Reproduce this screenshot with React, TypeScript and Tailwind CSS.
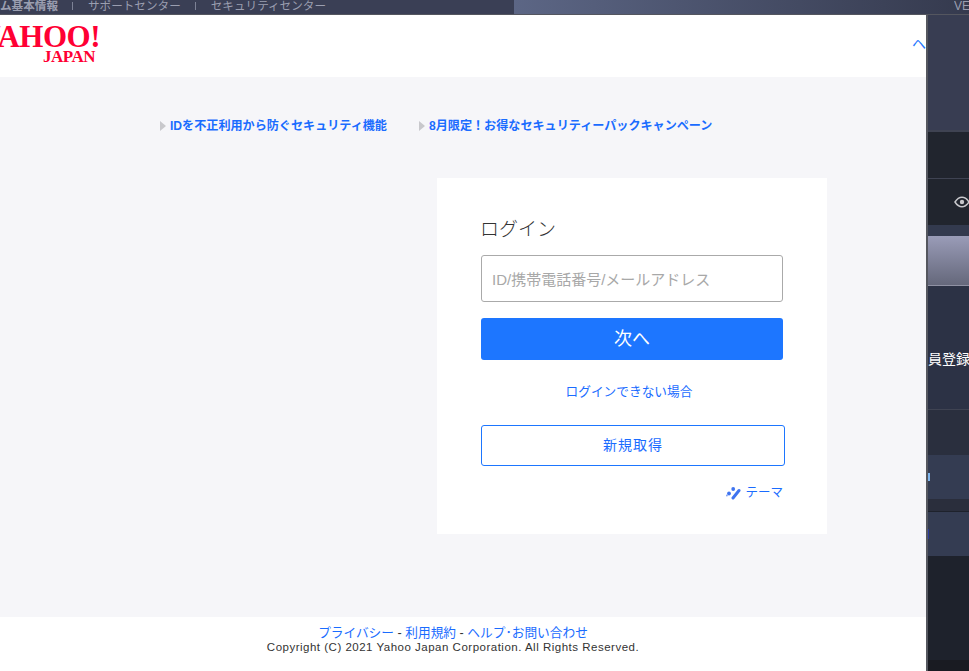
import { Fragment } from 'react'

const TOP_LINKS = ['ム基本情報', 'サポートセンター', 'セキュリティセンター']

const NOTICES = [
  { label: 'IDを不正利用から防ぐセキュリティ機能', className: 'w-[259px]' },
  { label: '8月限定！お得なセキュリティーパックキャンペーン', className: '' },
]

export default function App() {
  return (
    <div className="flex flex-col w-[969px] h-[671px] overflow-hidden bg-[#2c3245] font-['Liberation_Sans','Noto_Sans_CJK_JP',sans-serif]">
      <TopStrip />
      <div className="flex flex-1 min-h-0">
        <main className="flex flex-col w-[926px] shrink-0 bg-white">
          {/* Header */}
          <header className="flex items-center h-[62px] shrink-0 overflow-hidden">
            <YahooLogo />
            <a className="ml-[812px] mb-[4px] shrink-0 text-[14px] text-[#1d76ff] whitespace-nowrap">ヘルプ</a>
          </header>

          {/* Gray content */}
          <div className="flex-1 bg-[#f6f6f9] pl-[160px] pt-[39px]">
            <div className="flex items-center h-[20px]">
              {NOTICES.map((notice) => (
                <div key={notice.label} className={`flex items-center shrink-0 ${notice.className}`}>
                  <span className="w-0 h-0 mr-[4px] border-y-[5px] border-y-transparent border-l-[6px] border-l-[#c8c8cc]" />
                  <a className="text-[12.1px] font-bold text-[#1a6cff] whitespace-nowrap">{notice.label}</a>
                </div>
              ))}
            </div>
            <LoginCard />
          </div>

          {/* Footer */}
          <footer className="flex flex-col items-center h-[54px] shrink-0 pt-[9px] pr-[20px] text-center">
            <div className="h-[14px] leading-[14px] text-[12.7px] text-[#1a6cff] whitespace-nowrap">
              プライバシー <span className="text-[#333]">-</span> 利用規約 <span className="text-[#333]">-</span> ヘルプ･お問い合わせ
            </div>
            <div className="h-[14px] leading-[14px] text-[11.5px] text-[#333] tracking-[0.5px] whitespace-nowrap">
              Copyright (C) 2021 Yahoo Japan Corporation. All Rights Reserved.
            </div>
          </footer>
        </main>
        <SideStrip />
      </div>
    </div>
  )
}

function TopStrip() {
  return (
    <div className="flex h-[15px] shrink-0 overflow-hidden border-b border-[#54565f] bg-[#3a3f55]">
      <div className="flex items-center w-[514px] shrink-0 h-[11px] text-[11.6px] text-[#9a9eb0] whitespace-nowrap">
        {TOP_LINKS.map((link, i) => (
          <Fragment key={link}>
            {i > 0 && <span className="w-px h-[8px] mx-[14.5px] bg-[#7d8296]" />}
            <span className={i === 0 ? 'font-bold' : ''}>{link}</span>
          </Fragment>
        ))}
      </div>
      <div className="flex flex-1 justify-end h-[14px] bg-gradient-to-r from-[#5c6685] to-[#353a4e]">
        <span className="w-[15px] overflow-hidden text-[12px] leading-[12px] text-[#9a9eb0]">VE</span>
      </div>
    </div>
  )
}

function YahooLogo() {
  return (
    <div className="flex flex-col items-end w-[100px] shrink-0 -mt-[5px] font-['Liberation_Serif',serif] font-bold text-[#ff0033]">
      <span className="h-[27px] leading-[27px] text-[31px] tracking-[-0.5px] whitespace-nowrap">YAHOO!</span>
      <span className="h-[14px] leading-[14px] mr-[5px] text-[17px] tracking-[-0.5px]">JAPAN</span>
    </div>
  )
}

function LoginCard() {
  return (
    <section className="flex flex-col w-[390px] h-[356px] mt-[42px] ml-[277px] pl-[44px] pt-[39px] bg-white">
      <h1 className="h-[26px] leading-[26px] text-[19px] -ml-[1px] font-light text-[#333]">ログイン</h1>
      <div className="flex items-center w-[302px] h-[47px] mt-[12px] pl-[10px] pt-[3px] border border-[#aaaaaa] rounded-[3px] text-[15px] text-[#a8a8a8]">
        ID/携帯電話番号/メールアドレス
      </div>
      <button type="button" className="w-[302px] h-[42px] mt-[16px] rounded-[3px] bg-[#1d76ff] text-[18px] text-white">
        次へ
      </button>
      <a className="w-[302px] mt-[22px] -ml-[3px] h-[20px] leading-[20px] text-center text-[12.7px] text-[#1a6cff]">ログインできない場合</a>
      <button type="button" className="w-[304px] h-[41px] mt-[23px] rounded-[3px] border border-[#1d76ff] text-[14px] tracking-[1px] text-[#1a6cff]">
        新規取得
      </button>
      <a className="flex items-center justify-end gap-[4px] w-[302px] h-[18px] mt-[18px] text-[12.5px] text-[#1a6cff]">
        <ThemeIcon />
        テーマ
      </a>
    </section>
  )
}

function ThemeIcon() {
  return (
    <svg width="15" height="13" viewBox="0 0 15 13" fill="none">
      <path d="M7 11L13 3.5" stroke="#3f74f0" strokeWidth="3" strokeLinecap="round" />
      <circle cx="7.2" cy="2" r="1.9" fill="#3f74f0" />
      <circle cx="3" cy="6.5" r="1.9" fill="#3f74f0" />
      <circle cx="0.9" cy="8.5" r="0.9" fill="#7fa0f5" />
    </svg>
  )
}

function SideStrip() {
  return (
    <aside className="flex flex-col flex-1 min-w-0 overflow-hidden border-l-2 border-[#55575f] bg-[#2c3245]">
      <div className="h-[115px] shrink-0 bg-[#383d52]" />
      <div className="h-[48px] shrink-0 border-t-2 border-[#3f4352] bg-[#21252e]" />
      <div className="flex items-center justify-end h-[47px] shrink-0 border-t border-[#3f4352] bg-[#21252e] text-[#c8c8cc]">
        <svg className="shrink-0 -mr-[1px]" width="16" height="12" viewBox="0 0 16 12" fill="none">
          <path d="M1 6C3 2.8 5.2 1.2 8 1.2S13 2.8 15 6c-2 3.2-4.2 4.8-7 4.8S3 9.2 1 6Z" stroke="currentColor" strokeWidth="1.5" />
          <circle cx="8" cy="6" r="2.2" fill="currentColor" />
        </svg>
      </div>
      <div className="h-[11px] shrink-0 bg-[#333a4e]" />
      <div className="h-[50px] shrink-0 border-b border-[#8f91a3] bg-gradient-to-b from-[#9a9cb8] to-[#65687b]" />
      <div className="flex items-center h-[123px] shrink-0 pt-[24px] bg-[#2c3245] text-[14px] text-white whitespace-nowrap">
        員登録
      </div>
      <div className="h-[46px] shrink-0 border-t border-[#3f4352] bg-[#2a2f3e]" />
      <div className="flex items-center h-[44px] shrink-0 bg-[#343c52]">
        <span className="w-[2px] h-[8px] bg-[#7fb6ee]" />
      </div>
      <div className="h-[13px] shrink-0 border-b border-[#1e222c] bg-[#2a2e3c]" />
      <div className="flex items-center h-[44px] shrink-0 bg-[#343c52]">
        <span className="w-[1px] h-[10px] bg-[#2a3a9a]" />
      </div>
      <div className="flex-1 bg-[#1e222c]" />
      <div className="h-[11px] shrink-0 bg-[#191b22]" />
    </aside>
  )
}
